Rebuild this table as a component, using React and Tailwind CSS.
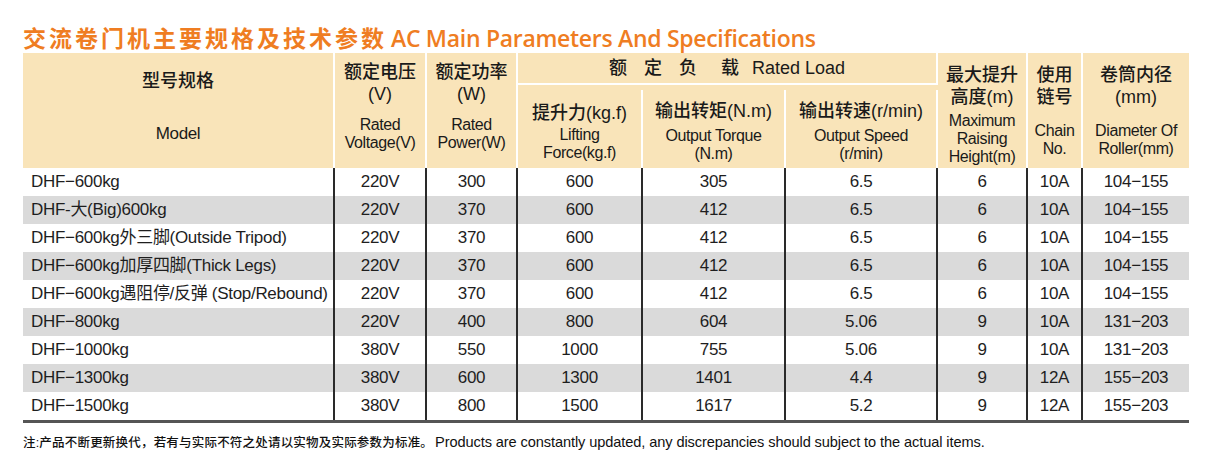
import React from "react";

const font = { fontFamily: '"Liberation Sans", Arial, "Noto Sans CJK SC", sans-serif' };
const cjk = { fontFamily: '"Liberation Sans", "Noto Sans CJK SC", sans-serif' };

const cols = "grid grid-cols-[312px_92px_91px_125px_143px_152px_90px_55px_106px]";

const rows = [
  ["DHF-600kg", "220V", "300", "600", "305", "6.5", "6", "10A", "104-155"],
  ["DHF-大(Big)600kg", "220V", "370", "600", "412", "6.5", "6", "10A", "104-155"],
  ["DHF-600kg外三脚(Outside Tripod)", "220V", "370", "600", "412", "6.5", "6", "10A", "104-155"],
  ["DHF-600kg加厚四脚(Thick Legs)", "220V", "370", "600", "412", "6.5", "6", "10A", "104-155"],
  ["DHF-600kg遇阻停/反弹 (Stop/Rebound)", "220V", "370", "600", "412", "6.5", "6", "10A", "104-155"],
  ["DHF-800kg", "220V", "400", "800", "604", "5.06", "9", "10A", "131-203"],
  ["DHF-1000kg", "380V", "550", "1000", "755", "5.06", "9", "10A", "131-203"],
  ["DHF-1300kg", "380V", "600", "1300", "1401", "4.4", "9", "12A", "155-203"],
  ["DHF-1500kg", "380V", "800", "1500", "1617", "5.2", "9", "12A", "155-203"],
];

const zh = "text-[18px] leading-[22px] font-medium text-[#1a1a1a]";
const en = "text-[16px] leading-[18px] tracking-[-0.4px] text-[#1a1a1a]";

function Header() {
  return (
    <div className={`${cols} bg-[#f9e4b9] h-[115px]`} style={cjk}>
      {/* Model */}
      <div className="row-span-2 border-r-2 border-white flex flex-col items-center pt-[17px]">
        <div className={zh}>型号规格</div>
        <div className={`${en} text-[17px] mt-[33px]`}>Model</div>
      </div>
      {/* Voltage */}
      <div className="row-span-2 border-r-2 border-white flex flex-col items-center pt-[8px]">
        <div className={zh}>额定电压</div>
        <div className={zh}>(V)</div>
        <div className={`${en} mt-[11px]`}>Rated</div>
        <div className={en}>Voltage(V)</div>
      </div>
      {/* Power */}
      <div className="row-span-2 border-r-2 border-white flex flex-col items-center pt-[8px]">
        <div className={zh}>额定功率</div>
        <div className={zh}>(W)</div>
        <div className={`${en} mt-[11px]`}>Rated</div>
        <div className={en}>Power(W)</div>
      </div>
      {/* Rated load group */}
      <div className="col-span-3 h-[32px] border-r-2 border-b-2 border-white flex items-center justify-center">
        <div className={`${zh} flex items-center`}>
          <span>额</span>
          <span className="ml-[17px]">定</span>
          <span className="ml-[17px]">负</span>
          <span className="ml-[24px]">载</span>
          <span className="ml-[13px] text-[18px] font-normal" style={font}>Rated Load</span>
        </div>
      </div>
      {/* Height */}
      <div className="row-span-2 col-start-7 row-start-1 border-r-2 border-white flex flex-col items-center pt-[11px]">
        <div className={`${zh} leading-[20px]`}>最大提升</div>
        <div className={`${zh} leading-[20px]`}>高度(m)</div>
        <div className={`${en} mt-[4px]`}>Maximum</div>
        <div className={en}>Raising</div>
        <div className={en}>Height(m)</div>
      </div>
      {/* Chain */}
      <div className="row-span-2 col-start-8 row-start-1 border-r-2 border-white flex flex-col items-center pt-[11px]">
        <div className={`${zh} leading-[20px]`}>使用</div>
        <div className={`${zh} leading-[20px]`}>链号</div>
        <div className={`${en} mt-[14px] leading-[17px]`}>Chain</div>
        <div className={`${en} leading-[17px]`}>No.</div>
      </div>
      {/* Diameter */}
      <div className="row-span-2 col-start-9 row-start-1 flex flex-col items-center pt-[11px]">
        <div className={`${zh} leading-[20px]`}>卷筒内径</div>
        <div className={`${zh} leading-[20px]`}>(mm)</div>
        <div className={`${en} mt-[14px] leading-[17px]`}>Diameter Of</div>
        <div className={`${en} leading-[17px]`}>Roller(mm)</div>
      </div>
      {/* Sub columns */}
      <div className="col-start-4 row-start-2 border-r-2 border-white flex flex-col items-center pt-[12px]">
        <div className={zh}>提升力(kg.f)</div>
        <div className={`${en} mt-[2px]`}>Lifting</div>
        <div className={en}>Force(kg.f)</div>
      </div>
      <div className="col-start-5 row-start-2 border-r-2 border-white flex flex-col items-center pt-[10px]">
        <div className={zh}>输出转矩(N.m)</div>
        <div className={`${en} mt-[5px]`}>Output Torque</div>
        <div className={en}>(N.m)</div>
      </div>
      <div className="col-start-6 row-start-2 border-r-2 border-white flex flex-col items-center pt-[10px]">
        <div className={zh}>输出转速(r/min)</div>
        <div className={`${en} mt-[5px]`}>Output Speed</div>
        <div className={en}>(r/min)</div>
      </div>
    </div>
  );
}

export default function App() {
  return (
    <div className="w-[1210px] h-[461px] bg-white pl-[23px]" style={cjk}>
      <div
        className="pt-[26px] leading-[24px] text-[23px] font-bold text-[#ef7d22] mb-[3px] whitespace-nowrap"
        style={{ fontFamily: '"Open Sans", "Noto Sans CJK SC", sans-serif' }}
      >
        <span className="tracking-[3px]">交流卷门机主要规格及技术参数</span>
        <span className="ml-[4px] font-semibold tracking-[-0.3px]">AC Main Parameters And Specifications</span>
      </div>

      <div className="w-[1166px]">
        <Header />
        <div className="border-b-[3px] border-[#555]">
          {rows.map((r, i) => (
            <div
              key={i}
              className={`${cols} h-[28px] text-[17px] tracking-[-0.3px] text-[#1e1e1e] ${i % 2 === 1 ? "bg-[#dadada]" : "bg-white"}`}
              style={cjk}
            >
              {r.map((c, j) => (
                <div
                  key={j}
                  className={`flex items-center whitespace-nowrap ${j === 0 ? "pl-[8px]" : "justify-center"} ${j < 8 ? "border-r-2 border-[#2a2a2a]" : ""}`}
                >
                  {c.replace(/-(?=\d)/g, "−")}
                </div>
              ))}
            </div>
          ))}
        </div>
      </div>

      <div className="mt-[11px] leading-[16px] text-[#111] whitespace-nowrap font-medium" style={cjk}>
        <span className="text-[12.5px] tracking-[0.2px]">注:产品不断更新换代，若有与实际不符之处请以实物及实际参数为标准。</span>
        <span className="ml-[2px] text-[14.6px] tracking-[-0.1px]">Products are constantly updated, any discrepancies should subject to the actual items.</span>
      </div>
    </div>
  );
}
